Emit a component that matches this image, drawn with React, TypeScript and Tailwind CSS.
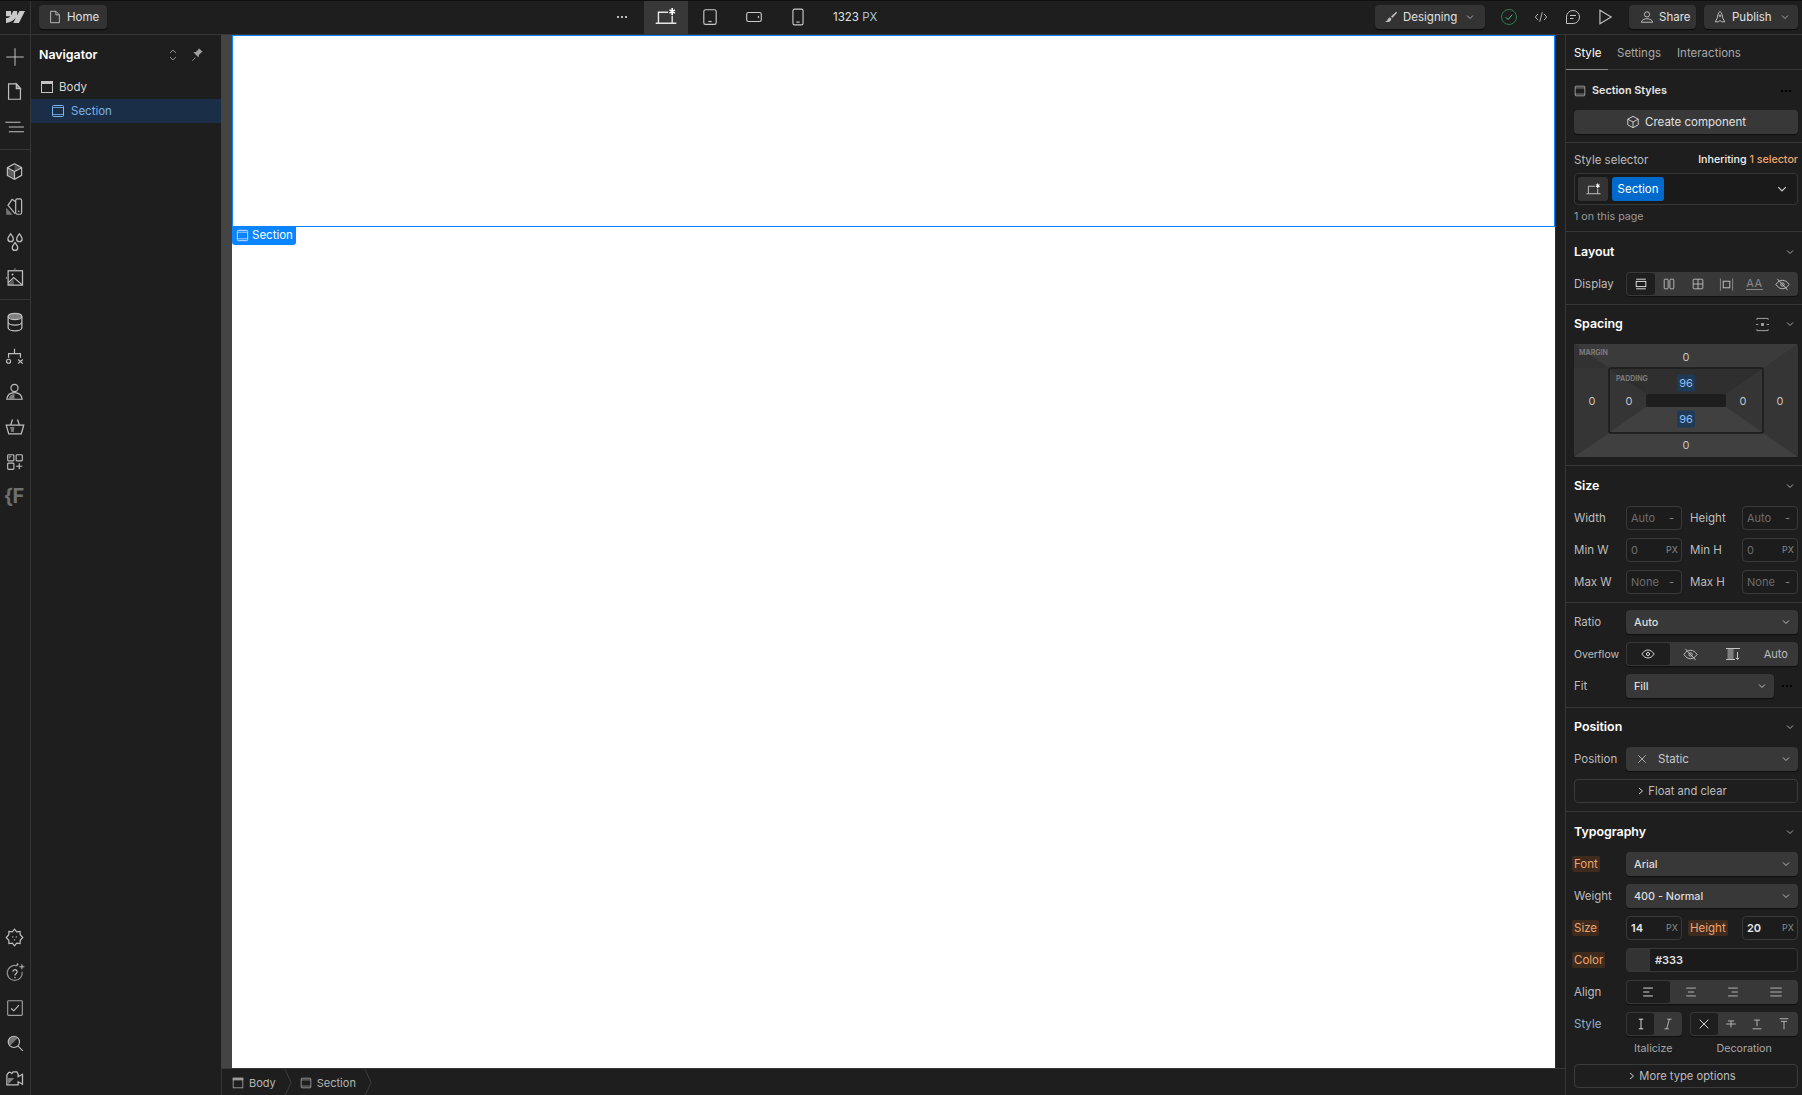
import React from 'react';

type IconProps = { size?: number; className?: string; children: React.ReactNode };

const Ic = ({ size = 16, className = '', children }: IconProps) => (
  <svg
    width={size}
    height={size}
    viewBox="0 0 16 16"
    fill="none"
    stroke="currentColor"
    strokeWidth={1}
    className={`shrink-0 ${className}`}
  >
    {children}
  </svg>
);

const Chevron = ({ className = 'text-[#bdbdbd]' }: { className?: string }) => (
  <svg width="10" height="10" viewBox="0 0 10 10" fill="none" stroke="currentColor" className={`shrink-0 ${className}`}>
    <path d="M2 3.5 5 6.5 8 3.5" />
  </svg>
);

const Dots = ({ className = 'text-[#bdbdbd]' }: { className?: string }) => (
  <svg width="12" height="4" viewBox="0 0 12 4" fill="currentColor" className={`shrink-0 ${className}`}>
    <rect x="1" y="1" width="2" height="2" />
    <rect x="5" y="1" width="2" height="2" />
    <rect x="9" y="1" width="2" height="2" />
  </svg>
);

const SectionIcon = ({ size = 16, className = '' }: { size?: number; className?: string }) => (
  <Ic size={size} className={className}>
    <rect x="2.5" y="2.5" width="11" height="11" rx="1" />
    <path d="M2.5 4.5h11M2.5 11.5h11" strokeOpacity="0.8" />
  </Ic>
);

const BodyIcon = ({ size = 16, className = '' }: { size?: number; className?: string }) => (
  <Ic size={size} className={className}>
    <rect x="2.5" y="2.5" width="11" height="11" />
    <rect x="2.5" y="2.5" width="11" height="2" fill="currentColor" />
  </Ic>
);

const DesktopStar = ({ size = 16 }: { size?: number }) => (
  <Ic size={size}>
    <path d="M2.5 12V4.5h7M.5 12.5h15M12.5 7v5.500" />
    <path d="M12.5 1.500v5M10.500 2.800l4 2.400M14.500 2.800l-4 2.400" strokeWidth="1.200" className="text-white" />
  </Ic>
);

const railTop = [
  <Ic size={20} key="add"><path d="M8 1v14M1 8h14" strokeWidth="0.8" /></Ic>,
  <Ic size={19} key="pages">
    <path d="M3 1.500h6.500l3.500 4v9H3z" />
    <path d="M9.500 1.500l3.500 4H9.500z" fill="currentColor" fillOpacity="0.55" />
  </Ic>,
  <Ic size={22} key="nav"><path d="M1 4.500h11M3.500 8h11M3.500 11.500h11" strokeWidth="0.8" /></Ic>,
];

const railBuild = [
  <Ic size={19} key="cube">
    <path d="M8 1.500 14 4.800v6.400L8 14.500 2 11.200V4.800z" />
    <path d="M2 4.800 8 8l6-3.200M8 8v6.500" />
    <path d="M2.500 5.500 8 8.500v5L2.500 10.500z" fill="currentColor" fillOpacity="0.4" stroke="none" />
    <path d="M8 2 13.500 4.800 8 7.500z" fill="currentColor" fillOpacity="0.3" stroke="none" />
  </Ic>,
  <Ic size={19} key="swatch">
    <rect x="9" y="1.500" width="5" height="13" rx="1.500" />
    <path d="M9 4 6 2 2.500 7l6 7" />
    <path d="M1 15V9l5.500 6z" fill="currentColor" fillOpacity="0.55" stroke="none" />
    <circle cx="11.500" cy="12" r="0.700" fill="currentColor" stroke="none" />
  </Ic>,
  <Ic size={20} key="drops">
    <path d="M4.500 1.500c1.200 1.700 2.200 2.800 2.200 4a2.200 2.200 0 0 1-4.400 0c0-1.200 1-2.300 2.200-4z" />
    <path d="M11.500 1.500c1.200 1.700 2.200 2.800 2.200 4a2.200 2.200 0 0 1-4.400 0c0-1.200 1-2.300 2.200-4z" />
    <path d="M8 8.500c1.200 1.700 2.200 2.800 2.200 4a2.200 2.200 0 0 1-4.400 0c0-1.200 1-2.300 2.200-4z" />
  </Ic>,
  <Ic size={20} key="assets">
    <rect x="2.500" y="3" width="11.500" height="11.500" />
    <circle cx="6" cy="6" r="0.800" fill="currentColor" stroke="none" />
    <path d="M2.500 12.500 7 8.500l7 6" />
    <path d="M3 13 7 9.500v5H3z" fill="currentColor" fillOpacity="0.4" stroke="none" />
    <path d="M8 .800 9.300 2H6.700zM.3 8.700 1.600 7.500v2.400z" fill="currentColor" fillOpacity="0.6" stroke="none" />
  </Ic>,
];

const railData = [
  <Ic size={20} key="db">
    <ellipse cx="8" cy="3.500" rx="5.500" ry="2.500" fill="currentColor" fillOpacity="0.6" />
    <path d="M2.500 3.500v9c0 1.400 2.500 2.500 5.500 2.500s5.500-1.100 5.500-2.500v-9M2.500 8c0 1.400 2.500 2.500 5.500 2.500s5.500-1.100 5.500-2.500" />
  </Ic>,
  <Ic size={19} key="logic">
    <path d="M8 1.500v4M3 9V5.500h10V9" />
    <circle cx="3" cy="12" r="1.700" />
    <path d="M11 10.500l4 3.500M15 10.500l-4 3.500" />
  </Ic>,
  <Ic size={19} key="user">
    <circle cx="8" cy="5" r="3" />
    <path d="M1.500 14.500c.5-3.500 3-5.500 6.500-5.500s6 2 6.500 5.500z" />
    <path d="M3 14c.5-2.500 2.500-4 5-4v4z" fill="currentColor" fillOpacity="0.6" stroke="none" />
  </Ic>,
  <Ic size={20} key="cart">
    <path d="M1 6.500h14L13 13.500H3zM4.500 6.500 6 2M11.500 6.500 10 2" />
    <path d="M4 8h3.500l-.5 4H5z" fill="currentColor" fillOpacity="0.55" stroke="none" />
  </Ic>,
  <Ic size={18} key="apps">
    <rect x="1.500" y="1.500" width="5.500" height="5.500" rx="0.800" />
    <rect x="9" y="1.500" width="5.500" height="5.500" rx="0.800" />
    <rect x="1.500" y="9" width="5.500" height="5.500" rx="0.800" />
    <path d="M11.800 9v5.500M9 11.800h5.500" />
    <path d="M2.500 2.500h3l-3 3z" fill="currentColor" fillOpacity="0.6" stroke="none" />
  </Ic>,
];

const railBottom = [
  <Ic size={19} key="gear">
    <path d="M8 1 9.800 3.300 12.700 2.900 12.800 5.600 15 8 12.800 10.400 12.700 13.100 9.800 12.700 8 15 6.200 12.700 3.300 13.100 3.200 10.400 1 8 3.200 5.600 3.300 2.900 6.200 3.300z" />
    <circle cx="6.500" cy="7.500" r="0.600" fill="currentColor" stroke="none" />
    <circle cx="9.500" cy="7.500" r="0.600" fill="currentColor" stroke="none" />
    <circle cx="8" cy="10" r="0.600" fill="currentColor" stroke="none" />
  </Ic>,
  <Ic size={20} key="help">
    <path d="M10 2.400A6 6 0 1 0 13.700 7" strokeOpacity="0.7" />
    <path d="M6.300 7a1.700 1.700 0 1 1 2.700 1.400c-.6.400-1 .8-1 1.500" />
    <circle cx="8" cy="11.500" r="0.600" fill="currentColor" stroke="none" />
    <path d="M13.500 1v4M11.500 3h4M10 .3v1.600M9.200 1.100h1.600" strokeWidth="0.8" />
  </Ic>,
  <Ic size={18} key="check">
    <rect x="1.500" y="1.500" width="13" height="13" rx="0.800" strokeOpacity="0.8" />
    <path d="M4.500 8.500 7 10.500 11.500 5.500" />
  </Ic>,
  <Ic size={18} key="search">
    <circle cx="7" cy="7" r="5" />
    <path d="M7 2a5 5 0 0 0-3.500 8.500l7-7A5 5 0 0 0 7 2z" fill="currentColor" fillOpacity="0.55" stroke="none" />
    <path d="M10.500 10.500 15 15" />
  </Ic>,
  <Ic size={20} key="camera">
    <path d="M1.500 5.500 3 3.500h1.500l1 1 1-1.500h3l1 2v2l3.500-2v8l-3.500-2v2.500h-9z" />
    <path d="M2.500 8h5l-5 5z" fill="currentColor" fillOpacity="0.6" stroke="none" />
  </Ic>,
];

const RailItem = ({ children }: { children: React.ReactNode }) => (
  <div className="h-[35px] pr-[1px] flex items-center justify-center text-[#bfbfbf]">{children}</div>
);

const LeftRail = () => (
  <div className="w-[31px] shrink-0 border-r border-[#363636] flex flex-col">
    <div className="pt-[4px] pb-[5px] border-b border-[#363636]">
      {railTop.map((icon, i) => <RailItem key={i}>{icon}</RailItem>)}
    </div>
    <div className="pt-[4px] pb-[5px] border-b border-[#363636]">
      {railBuild.map((icon, i) => <RailItem key={i}>{icon}</RailItem>)}
    </div>
    <div className="pt-[4px]">
      {railData.map((icon, i) => <RailItem key={i}>{icon}</RailItem>)}
      <RailItem>
        <span className="text-[20px] font-bold leading-none text-[#6f6f6f] tracking-[-1px] -ml-[2px] -mt-[1px]">{'{F'}</span>
      </RailItem>
    </div>
    <div className="mt-auto">
      {railBottom.map((icon, i) => <RailItem key={i}>{icon}</RailItem>)}
    </div>
  </div>
);

const TopButton = ({ icon, label, chevron, className = '' }: { icon: React.ReactNode; label: string; chevron?: boolean; className?: string }) => (
  <div className={`h-[24px] -mt-[1px] rounded-[4px] bg-[#333333] shadow-[0_1px_1px_#0a0a0a] flex items-center text-[#e0e0e0] ${className}`}>
    {icon}
    <span>{label}</span>
    {chevron && <Chevron className="ml-[3px] text-[#a8a8a8]" />}
  </div>
);

const TopBar = () => (
  <div className="h-[35px] shrink-0 flex items-center bg-[#1e1e1e] border-t border-t-[#0f0f0f] border-b border-b-[#363636]">
    <div className="w-[31px] h-full shrink-0 border-r border-[#363636] flex items-center justify-center pb-[1px]">
      <svg width="19" height="12" viewBox="0 0 1080 674" fill="#c9c9c9">
        <path d="M1080 0L735.386 674H411.695L555.916 394.662H549.445C430.464 549.193 252.942 650.924 0 674V398.53C0 398.53 161.813 388.97 256.94 288.959H0V0.00632185H288.771V237.674L295.253 237.647L413.255 0.00632185H631.645V236.168L638.126 236.158L760.556 0H1080Z" />
      </svg>
    </div>
    <TopButton
      className="ml-2 w-[68px] pl-[9px] gap-[5px]"
      icon={<Ic size={14} className="text-[#c9c9c9]"><path d="M3 1.500h6l4 4v9H3zM9 1.500v4h4" /></Ic>}
      label="Home"
    />
    <div className="w-[493px] shrink-0" />
    <div className="w-[44px] flex justify-center pb-[1px]"><Dots /></div>
    <div className="w-[44px] h-full bg-[#383838] flex items-center justify-center text-[#e6e6e6] pb-[1px]"><DesktopStar size={22} /></div>
    <div className="w-[44px] h-full flex items-center justify-center text-[#c9c9c9] pb-[1px]">
      <Ic size={18}><rect x="2.500" y="1.500" width="11" height="13" rx="1.500" /><path d="M6.500 12h3" /></Ic>
    </div>
    <div className="w-[44px] h-full flex items-center justify-center text-[#c9c9c9] pb-[1px]">
      <Ic size={18}><rect x="1.500" y="4" width="13" height="8" rx="1.500" /><path d="M12 7v2" /></Ic>
    </div>
    <div className="w-[44px] h-full flex items-center justify-center text-[#c9c9c9] pb-[1px]">
      <Ic size={18}><rect x="3.500" y="1" width="9" height="14" rx="1.500" /><path d="M6.500 12.500h3" /></Ic>
    </div>
    <div className="ml-[13px] -mt-[1px] text-[#e0e0e0]">1323 <span className="text-[#a8c0d8]">PX</span></div>
    <div className="flex-1" />
    <TopButton
      className="w-[110px] pl-[9px] gap-[5px]"
      icon={
        <Ic size={14} className="text-[#bdbdbd]">
          <path d="M14 2 8 7.500 9.500 9 15 3z" fill="currentColor" stroke="none" />
          <path d="M7 8.500c-2 0-2.500 1.500-3 3-.3 1-1.500 1.500-3 2 3 .8 7 .5 7.500-3.500z" fill="currentColor" stroke="none" />
        </Ic>
      }
      label="Designing"
      chevron
    />
    <div className="w-[16px]" />
    <div className="w-[16px] h-[16px] -mt-[1px] rounded-full border border-[#2f7a4f] flex items-center justify-center text-[#4ad07f]">
      <Ic size={10}><path d="M3 8.500 6.500 12 13 4.500" strokeWidth="1.500" /></Ic>
    </div>
    <div className="w-[32px] -mt-[1px] flex justify-center text-[#c4c4c4] ml-[8px]">
      <Ic size={14}><path d="M4.500 4.500 1.500 8l3 3.500M11.500 4.500l3 3.500-3 3.500M9.500 2.500l-3 11" /></Ic>
    </div>
    <div className="w-[32px] -mt-[1px] flex justify-center text-[#c4c4c4]">
      <Ic size={16}><path d="M8 1.500a6.500 6.500 0 1 1 0 13H1.500V8A6.500 6.500 0 0 1 8 1.500z" /><path d="M5 6.500h6M5 9.500h3.500" /></Ic>
    </div>
    <div className="w-[32px] -mt-[1px] flex justify-center text-[#c4c4c4]">
      <Ic size={18}><path d="M3.500 2v12L13.500 8z" /></Ic>
    </div>
    <TopButton
      className="ml-[8px] w-[67px] pl-[11px] gap-[5px]"
      icon={<Ic size={14} className="text-[#c9c9c9]"><circle cx="8" cy="5" r="3" /><path d="M1.500 14c.5-2.500 3-4 6.500-4s6 1.500 6.500 4z" /></Ic>}
      label="Share"
    />
    <TopButton
      className="ml-[8px] mr-[4px] w-[94px] pl-[9px] gap-[5px]"
      icon={
        <Ic size={14} className="text-[#c9c9c9]">
          <path d="M8 1.500c2 2 3 4.500 3 7.500l2.500 4.500H10L8 12l-2 1.500H2.500L5 9c0-3 1-5.500 3-7.500z" />
          <circle cx="8" cy="6.500" r="1" />
        </Ic>
      }
      label="Publish"
      chevron
    />
  </div>
);

const Navigator = () => (
  <div className="w-[190px] shrink-0 flex flex-col">
    <div className="h-[38px] pt-[1px] flex items-center pl-2 pr-[16px]">
      <span className="text-white font-semibold text-[12.4px]">Navigator</span>
      <div className="flex-1" />
      <svg width="10" height="12" viewBox="0 0 10 12" fill="none" stroke="#8f8f8f" className="mr-[13px]">
        <path d="M2 4 5 1l3 3M2 8l3 3 3-3" />
      </svg>
      <Ic size={14} className="text-[#a0a0a0]">
        <path d="M9.500 1.500 14.500 6.500 13 7l-3.500 3.500L9 14 2 7l3.500-.5L9 3z" fill="currentColor" stroke="none" transform="translate(1 -1) scale(0.85)" />
        <path d="M5 11 1.500 14.500" />
      </Ic>
    </div>
    <div className="h-[26px] pt-[1px] pl-[8px] flex items-center gap-[4px] text-[#d9d9d9]">
      <BodyIcon className="text-[#c4c4c4]" />
      <span>Body</span>
    </div>
    <div className="h-[24px] pl-[19px] flex items-center gap-[5px] bg-[#1a2f47] text-[#7fb0e6]">
      <SectionIcon className="text-[#7fb6f2]" />
      <span>Section</span>
    </div>
  </div>
);

const Canvas = () => (
  <div className="flex-1 min-h-0 flex">
    <div className="w-[11px] bg-[#444444]" />
    <div className="w-[1323px] bg-white relative">
      <div className="h-[192px] border border-[#0a84ff]" />
      <div className="absolute left-0 top-[191px] h-[19px] w-[64px] pb-[1px] bg-[#0a84ff] rounded-b-[3px] flex items-center pl-[3px] gap-[2px] text-white">
        <SectionIcon className="text-[#cfe6ff]" size={15} />
        <span>Section</span>
      </div>
    </div>
    <div className="flex-1 bg-[#1e1e1e] border-l border-[#2c2c2c]" />
  </div>
);

const Crumb = () => (
  <svg width="8" height="27" viewBox="0 0 8 27" fill="none" stroke="#3c3c3c" className="shrink-0">
    <path d="M1 0 7 13.500 1 27" />
  </svg>
);

const StatusBar = () => (
  <div className="h-[27px] shrink-0 flex items-center pt-[1px] text-[#b5b5b5] text-[11px] border-l border-t border-[#363636]">
    <BodyIcon size={14} className="ml-[9px] text-[#a0a0a0]" />
    <span className="ml-[4px]">Body</span>
    <div className="ml-[8px]"><Crumb /></div>
    <SectionIcon size={14} className="ml-[7px] text-[#a0a0a0]" />
    <span className="ml-[4px]">Section</span>
    <div className="ml-[8px]"><Crumb /></div>
  </div>
);

const Heading = ({ title, h = 'h-[40px]', extra }: { title: string; h?: string; extra?: React.ReactNode }) => (
  <div className={`${h} flex items-center pb-[1px]`}>
    <span className="text-white font-semibold text-[12.4px]">{title}</span>
    <div className="flex-1" />
    {extra}
    <Chevron className="text-[#a8a8a8] mr-[3px]" />
  </div>
);

const Label = ({ children, w = 'w-[52px]', hot, blue, small }: { children: string; w?: string; hot?: boolean; blue?: boolean; small?: boolean }) => (
  <div className={`${w} shrink-0`}>
    {hot ? (
      <span className="-ml-[2px] px-[2px] py-[1px] rounded-[2px] bg-[#3f2b1d] text-[#eea56f]">{children}</span>
    ) : (
      <span className={`${blue ? 'text-[#8fb0d0]' : 'text-[#bdbdbd]'} ${small ? 'text-[10.5px]' : ''}`}>{children}</span>
    )}
  </div>
);

const Select = ({ value, className = '', icon }: { value: string; className?: string; icon?: React.ReactNode }) => (
  <div className={`h-[24px] flex-1 rounded-[4px] bg-[#383838] shadow-[0_1px_1px_#0f0f0f] flex items-center pl-[8px] pr-[7px] text-[10.8px] text-[#dedede] font-medium ${className}`}>
    {icon}
    <span className={icon ? 'font-normal text-[11.5px] text-[#c9c9c9]' : 'pt-[1px]'}>{value}</span>
    <div className="flex-1" />
    <Chevron />
  </div>
);

const Row = ({ children }: { children: React.ReactNode }) => <div className="h-[24px] flex items-center">{children}</div>;

const Segmented = ({ items, active = 0, className = '' }: { items: React.ReactNode[]; active?: number; className?: string }) => (
  <div className={`h-[24px] rounded-[4px] bg-[#383838] shadow-[0_1px_1px_#0f0f0f] flex p-[1px] ${className}`}>
    {items.map((item, i) => (
      <div
        key={i}
        className={`flex-1 flex items-center justify-center rounded-[3px] ${i === active ? 'bg-[#1e1e1e] text-[#f0f0f0]' : 'text-[#c4c4c4]'}`}
      >
        {item}
      </div>
    ))}
  </div>
);

const SizeInput = ({ value, unit, strong }: { value: string; unit: string; strong?: boolean }) => (
  <div className={`w-[56px] h-[24px] shrink-0 rounded-[4px] border border-[#3a3a3a] bg-[#1c1c1c] flex items-center pl-[4px] pr-[3px] text-[11px] ${strong ? 'text-[#e6e6e6] font-semibold' : 'text-[#6e6e6e]'}`}>
    <span>{value}</span>
    <div className="flex-1" />
    <span className={`text-[#8a8a8a] font-normal ${unit === '-' ? 'mr-[4px] text-[11px]' : 'text-[9px]'}`}>{unit}</span>
  </div>
);

const OutlineButton = ({ label }: { label: string }) => (
  <div className="h-[24px] pr-[7px] rounded-[4px] border border-[#3a3a3a] flex items-center justify-center gap-[4px] text-[#bdbdbd] text-[11.2px]">
    <svg width="6" height="8" viewBox="0 0 6 8" fill="none" stroke="#d0d0d0"><path d="M1 1 4.500 4 1 7" /></svg>
    <span>{label}</span>
  </div>
);

const Sp = ({ x, y, v, blue }: { x: string; y: string; v: string; blue?: boolean }) => (
  <div
    className={`absolute ${x} ${y} -translate-x-1/2 -translate-y-1/2 text-[11px] leading-none flex items-center justify-center ${
      blue ? 'w-[18px] h-[17px] bg-[#1f3a57] text-[#8fc0f4] rounded-[2px]' : 'text-[#c4c4c4]'
    }`}
  >
    {v}
  </div>
);

const SpacingBox = () => (
  <div className="relative h-[113px]">
    <svg width="224" height="113" viewBox="0 0 224 113" className="absolute inset-0">
      <rect width="224" height="113" rx="3" fill="#353535" />
      <path d="M0 0H224L189 24H35z" fill="#3b3b3b" />
      <path d="M0 113H224L189 89H35z" fill="#404040" />
      <path d="M0 0 35 24H0z" fill="#323232" />
      <rect x="35" y="24" width="154" height="65" rx="2" fill="#353535" stroke="#1a1a1a" strokeWidth="1.500" />
      <path d="M36 25H188L152 50H72z" fill="#2f2f2f" />
      <path d="M36 88H188L152 63H72z" fill="#404040" />
      <rect x="72" y="50" width="80" height="13" rx="2" fill="#1e1e1e" />
    </svg>
    <span className="absolute left-[5px] top-[4px] text-[7px] leading-[10px] font-bold text-[#7c7c7c]">MARGIN</span>
    <span className="absolute left-[42px] top-[30px] text-[7px] leading-[10px] font-bold text-[#7c7c7c]">PADDING</span>
    <Sp x="left-[112px]" y="top-[13px]" v="0" />
    <Sp x="left-[112px]" y="top-[101px]" v="0" />
    <Sp x="left-[18px]" y="top-[57px]" v="0" />
    <Sp x="left-[206px]" y="top-[57px]" v="0" />
    <Sp x="left-[55px]" y="top-[57px]" v="0" />
    <Sp x="left-[169px]" y="top-[57px]" v="0" />
    <Sp x="left-[112px]" y="top-[39px]" v="96" blue />
    <Sp x="left-[112px]" y="top-[75px]" v="96" blue />
  </div>
);

const displayItems = [
  <Ic size={14} key="block"><path d="M2.500 2.500h11M2.500 13.500h11" /><rect x="2.500" y="5" width="11" height="6" /></Ic>,
  <Ic size={14} key="flex"><rect x="2.500" y="2.500" width="4.500" height="11" rx="1" /><rect x="9" y="2.500" width="4.500" height="11" rx="1" /></Ic>,
  <Ic size={14} key="grid"><rect x="2.500" y="2.500" width="11" height="11" rx="1" /><path d="M8 2.500v11M2.500 8h11" /></Ic>,
  <Ic size={15} key="inline"><path d="M1.500 1.500v13M14.500 1.500v13" strokeOpacity="0.6" /><rect x="4.500" y="4.500" width="7" height="7" /></Ic>,
  <span key="text" className="text-[11px] text-[#8a8a8a] border-b border-[#8a8a8a] leading-[11px] tracking-[0.5px]">AA</span>,
  <Ic size={15} key="none">
    <path d="M1 8c2-3 4.300-4.500 7-4.500S13 5 15 8c-2 3-4.300 4.500-7 4.500S3 11 1 8z" />
    <circle cx="8" cy="8" r="1.800" />
    <path d="M2.500 2 13.500 14" />
  </Ic>,
];

const overflowItems = [
  <Ic size={14} key="eye"><path d="M1 8c2-3 4.300-4.500 7-4.500S13 5 15 8c-2 3-4.300 4.500-7 4.500S3 11 1 8z" /><circle cx="8" cy="8" r="1.800" /></Ic>,
  <Ic size={15} key="hidden">
    <path d="M1 8c2-3 4.300-4.500 7-4.500S13 5 15 8c-2 3-4.300 4.500-7 4.500S3 11 1 8z" />
    <circle cx="8" cy="8" r="1.800" />
    <path d="M2.500 2 13.500 14" />
  </Ic>,
  <Ic size={16} key="scroll">
    <path d="M1 2.500h14M1 13.500h9" />
    <rect x="2.500" y="3" width="6" height="10" fill="currentColor" fillOpacity="0.5" stroke="none" />
    <path d="M12.500 6v7.500M10.800 11.800l1.700 1.700 1.700-1.700" />
  </Ic>,
  <span key="auto" className="text-[11px] text-[#bdbdbd]">Auto</span>,
];

const alignItems = [
  <Ic size={14} key="l"><path d="M2.500 3.500h11M2.500 8h7M2.500 12.500h11" /></Ic>,
  <Ic size={14} key="c"><path d="M2.500 3.500h11M4.500 8h7M2.500 12.500h11" /></Ic>,
  <Ic size={14} key="r"><path d="M2.500 3.500h11M6.500 8h7M2.500 12.500h11" /></Ic>,
  <Ic size={14} key="j"><path d="M1.500 3.500h13M1.500 8h13M1.500 12.500h13" /></Ic>,
];

const italicItems = [
  <Ic size={14} key="n"><path d="M5.500 2.500h5M5.500 13.500h5M8 2.500v11" /></Ic>,
  <Ic size={14} key="i"><path d="M7 2.500h5M4 13.500h5M9.500 2.500l-3 11" /></Ic>,
];

const decorationItems = [
  <Ic size={14} key="x"><path d="M3 3 13 13M13 3 3 13" /></Ic>,
  <Ic size={14} key="s"><path d="M4.500 4.500h7M8 4.500v7.500M2.500 8h11" /></Ic>,
  <Ic size={14} key="u"><path d="M4.500 3.500h7M8 3.500v7M3 13.500h10" /></Ic>,
  <Ic size={14} key="o"><path d="M3 2h10M4.500 5h7M8 5v9" /></Ic>,
];

const RightPanel = () => (
  <div className="w-[237px] shrink-0 border-l border-[#363636] flex flex-col overflow-hidden">
    {/* tabs */}
    <div className="h-[35px] shrink-0 flex border-b border-[#363636] text-[#a8a8a8]">
      <div className="w-[42px] pl-2 pt-[1px] flex items-center text-white border-b border-[#8a8a8a] h-[35px]">Style</div>
      <div className="ml-[9px] pt-[1px] flex items-center">Settings</div>
      <div className="ml-[16px] pt-[1px] flex items-center">Interactions</div>
    </div>

    <div className="pl-2 pr-1 pb-2 border-b border-[#363636]">
      <div className="h-[40px] pt-[1px] flex items-center">
        <SectionIcon size={14} className="text-[#a8a8a8] -ml-[1px]" />
        <span className="ml-[5px] text-[#e6e6e6] font-semibold text-[10.8px]">Section Styles</span>
        <div className="flex-1" />
        <Dots className="mr-[6px]" />
      </div>
      <div className="h-[24px] rounded-[4px] bg-[#383838] shadow-[0_1px_1px_#0f0f0f] flex items-center justify-center gap-[5px] text-[#e0e0e0]">
        <Ic size={14}>
          <path d="M8 1.500 14 4.800v6.400L8 14.500 2 11.200V4.800z" />
          <path d="M2 4.800 8 8l6-3.200M8 8v6.500" />
        </Ic>
        <span>Create component</span>
      </div>
    </div>

    <div className="pl-2 pr-1 border-b border-[#363636]">
      <div className="h-[30px] pt-[3px] flex items-center">
        <span className="text-[#bdbdbd]">Style selector</span>
        <div className="flex-1" />
        <span className="text-[10.7px] font-medium text-[#f0f0f0]">Inheriting <span className="text-[#f0a56c]">1 selector</span></span>
      </div>
      <div className="h-[32px] rounded-[4px] border border-[#363636] bg-[#1a1a1a] flex items-center pl-[3px] pr-[10px] gap-[4px]">
        <div className="w-[30px] h-[24px] rounded-[3px] bg-[#333333] flex items-center justify-center text-[#c9c9c9]"><DesktopStar size={15} /></div>
        <div className="w-[52px] h-[24px] rounded-[3px] bg-[#006acc] flex items-center justify-center text-white">Section</div>
        <div className="flex-1" />
        <Chevron className="text-[#c9c9c9] scale-125" />
      </div>
      <div className="h-[26px] pb-[3px] flex items-center text-[10.7px] text-[#9a9a9a]">1 on this page</div>
    </div>

    <div className="pl-2 pr-1 pb-2 border-b border-[#363636]">
      <Heading title="Layout" />
      <Row>
        <Label>Display</Label>
        <Segmented items={displayItems} className="flex-1" />
      </Row>
    </div>

    <div className="pl-2 pr-1 pb-2 border-b border-[#363636]">
      <Heading
        title="Spacing"
        h="h-[39px]"
        extra={
          <Ic size={15} className="text-[#a8a8a8] mr-[15px]">
            <path d="M2 3V1.500h12V3M2 13v1.500h12V13" />
            <path d="M1 8h2.500M12.500 8H15" />
            <rect x="6.500" y="6.500" width="3" height="3" fill="currentColor" stroke="none" />
          </Ic>
        }
      />
      <SpacingBox />
    </div>

    <div className="pl-2 pr-1 pb-2 border-b border-[#363636]">
      <Heading title="Size" />
      <div className="flex flex-col gap-2">
        <Row>
          <Label>Width</Label><SizeInput value="Auto" unit="-" />
          <div className="w-2" /><Label>Height</Label><SizeInput value="Auto" unit="-" />
        </Row>
        <Row>
          <Label>Min W</Label><SizeInput value="0" unit="PX" />
          <div className="w-2" /><Label>Min H</Label><SizeInput value="0" unit="PX" />
        </Row>
        <Row>
          <Label>Max W</Label><SizeInput value="None" unit="-" />
          <div className="w-2" /><Label>Max H</Label><SizeInput value="None" unit="-" />
        </Row>
      </div>
    </div>

    <div className="pl-2 pr-1 pt-[7px] pb-[9px] border-b border-[#363636] flex flex-col gap-2">
      <Row><Label>Ratio</Label><Select value="Auto" /></Row>
      <Row>
        <Label small>Overflow</Label>
        <Segmented items={overflowItems} className="flex-1" />
      </Row>
      <Row>
        <Label>Fit</Label>
        <Select value="Fill" />
        <Dots className="ml-[7px] mr-[5px]" />
      </Row>
    </div>

    <div className="pl-2 pr-1 pb-2 border-b border-[#363636]">
      <Heading title="Position" h="h-[39px]" />
      <div className="flex flex-col gap-2">
        <Row>
          <Label>Position</Label>
          <Select
            value="Static"
            className="pl-[10px]"
            icon={<Ic size={12} className="mr-[10px] text-[#d0d0d0]"><path d="M3 3 13 13M13 3 3 13" /></Ic>}
          />
        </Row>
        <OutlineButton label="Float and clear" />
      </div>
    </div>

    <div className="pl-2 pr-1">
      <Heading title="Typography" />
      <div className="flex flex-col gap-2">
        <Row><Label hot>Font</Label><Select value="Arial" /></Row>
        <Row><Label>Weight</Label><Select value="400 - Normal" /></Row>
        <Row>
          <Label hot>Size</Label><SizeInput value="14" unit="PX" strong />
          <div className="w-2" /><Label hot>Height</Label><SizeInput value="20" unit="PX" strong />
        </Row>
        <Row>
          <Label hot>Color</Label>
          <div className="flex-1 h-[24px] rounded-[4px] border border-[#383838] bg-[#1a1a1a] flex items-center overflow-hidden">
            <div className="w-[23px] h-full bg-[#333333]" />
            <span className="ml-[5px] text-[11px] font-semibold text-[#e0e0e0]">#333</span>
          </div>
        </Row>
        <Row><Label>Align</Label><Segmented items={alignItems} className="flex-1" /></Row>
        <Row>
          <Label blue>Style</Label>
          <Segmented items={italicItems} className="w-[56px]" />
          <Segmented items={decorationItems} className="w-[108px] ml-2" />
        </Row>
      </div>
      <div className="h-[24px] pt-[1px] flex items-center text-[10.7px] text-[#a8a8a8]">
        <div className="ml-[60px]">Italicize</div>
        <div className="ml-[44px]">Decoration</div>
      </div>
      <div className="mt-1"><OutlineButton label="More type options" /></div>
    </div>
  </div>
);

export default function App() {
  return (
    <div className="h-screen w-full flex flex-col overflow-hidden bg-[#1e1e1e] text-[11.5px] leading-[16px] [font-family:Inter,sans-serif]">
      <TopBar />
      <div className="flex-1 min-h-0 flex">
        <LeftRail />
        <Navigator />
        <div className="flex-1 min-w-0 flex flex-col">
          <Canvas />
          <StatusBar />
        </div>
        <RightPanel />
      </div>
    </div>
  );
}
